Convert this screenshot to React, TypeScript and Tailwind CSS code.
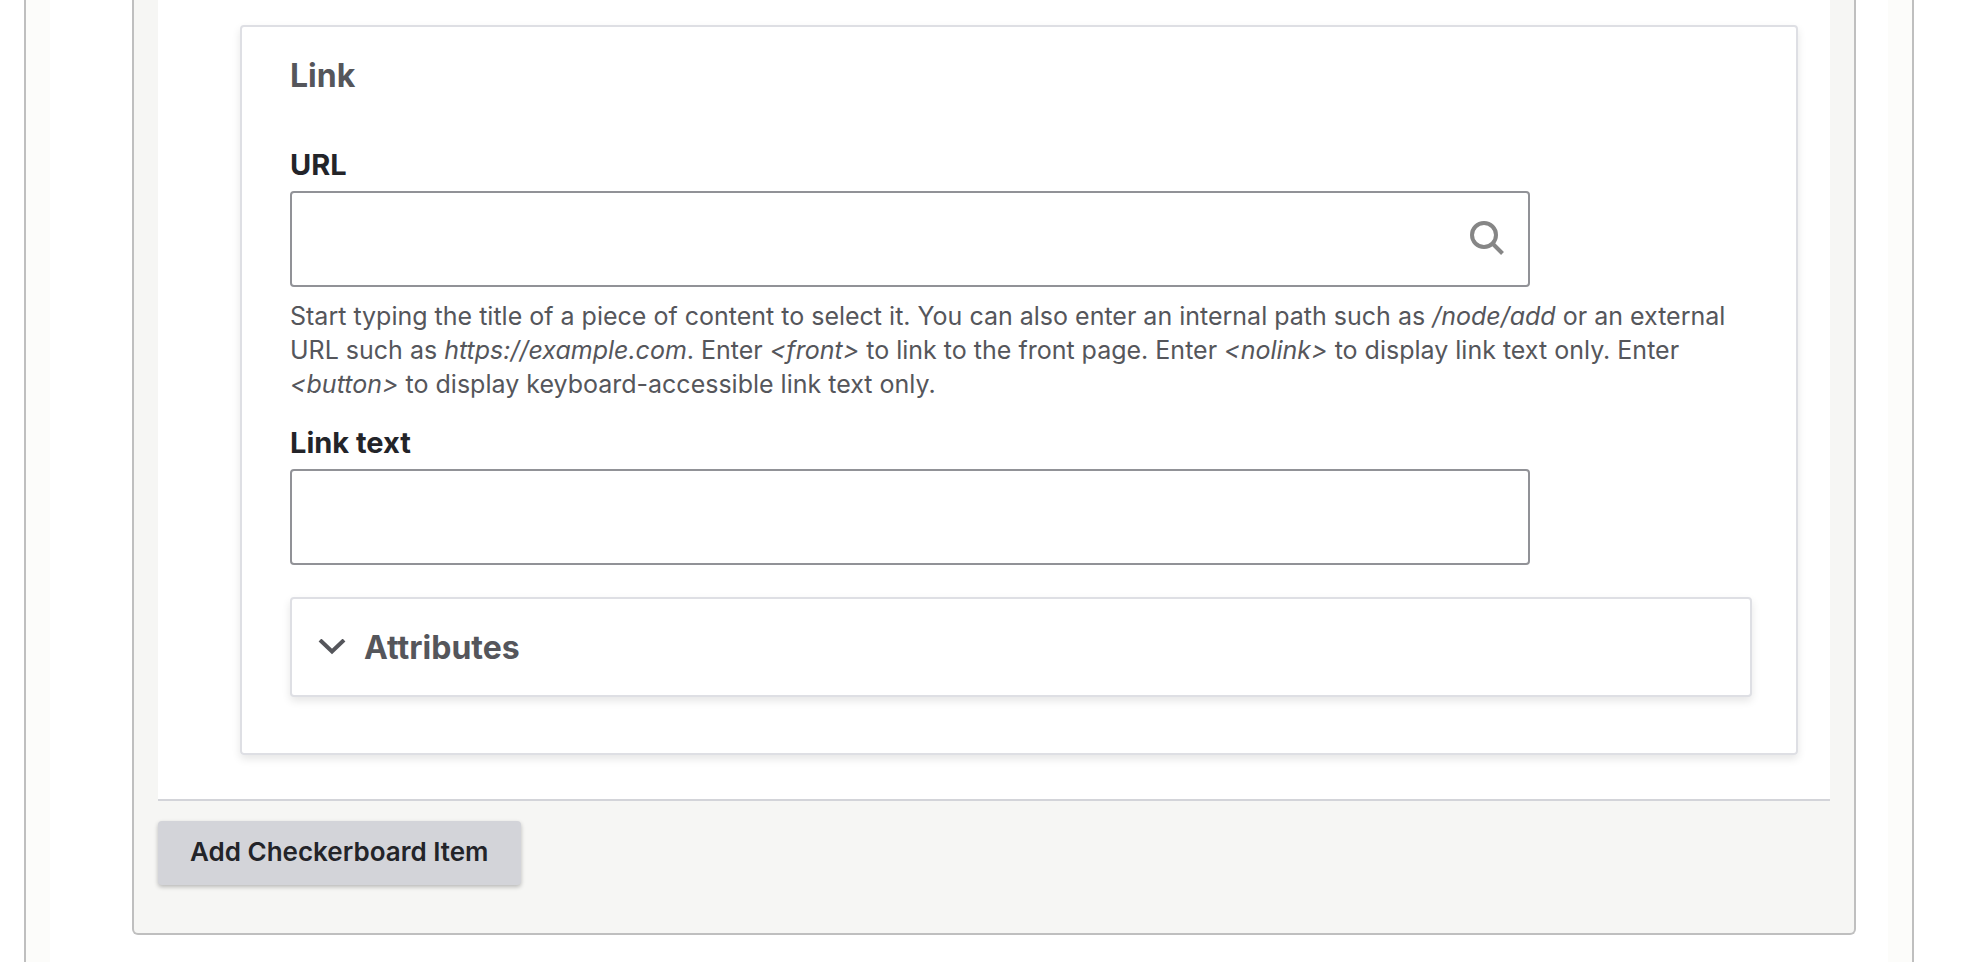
import { useState } from 'react'

const field = 'block w-full h-24 px-8 bg-white border-2 border-[#919297] rounded-[4px] text-[29px] text-[#232429] outline-none focus:ring-4 focus:ring-[#26a769]'
const label = 'block text-[29px] leading-9 font-bold text-[#232429]'
const card = 'bg-white border-2 border-[#dedfe4] rounded-[4px] shadow-[0_4px_8px_rgba(0,0,0,0.1)]'

export default function App() {
  const [url, setUrl] = useState('')
  const [linkText, setLinkText] = useState('')
  const [showAttributes, setShowAttributes] = useState(false)

  return (
    <div className="flex min-h-screen bg-white pl-6 pr-[58px] font-['Inter','Liberation_Sans',sans-serif]">
      <div className="flex flex-1 min-w-0 border-x-2 border-[#bfbfbf] bg-[#fcfcfa] px-6">
        <main className="flex-1 min-w-0 bg-white pl-[82px] pr-8">
          <section className="border-2 border-t-0 border-[#bfbfbf] rounded-b-[6px] bg-[#f6f6f4] px-6 pb-12">
            <div className="bg-white border-b-2 border-[#d3d4d9] pt-[25px] pb-11 pl-[82px] pr-8">
              <fieldset className={`${card} pt-7 pb-14 pl-12 pr-11`}>
                <h4 className="text-[32px] leading-[42px] font-bold text-[#55565b]">Link</h4>

                <div className="mt-[50px]">
                  <label htmlFor="url" className={label}>URL</label>
                  <div className="relative mt-2 max-w-[1240px]">
                    <input id="url" type="text" value={url} onChange={e => setUrl(e.target.value)} aria-describedby="url-help" className={`${field} pr-20`} />
                    <svg viewBox="0 0 34 34" className="absolute right-[26px] top-[30px] w-[34px] h-[34px]" fill="none" stroke="#868686" strokeWidth="4" aria-hidden="true">
                      <circle cx="14" cy="14" r="12" />
                      <path d="M22.5 22.5 32.5 32.5" />
                    </svg>
                  </div>
                  <p id="url-help" className="mt-3 text-[25px] leading-[34px] text-[#55565b]">
                    Start typing the title of a piece of content to select it. You can also enter an internal path such as <em>/node/add</em> or an external URL such as <em>https://example.com</em>. Enter <em>&lt;front&gt;</em> to link to the front page. Enter <em>&lt;nolink&gt;</em> to display link text only. Enter <em>&lt;button&gt;</em> to display keyboard-accessible link text only.
                  </p>
                </div>

                <div className="mt-6">
                  <label htmlFor="link-text" className={label}>Link text</label>
                  <div className="mt-2 max-w-[1240px]">
                    <input id="link-text" type="text" value={linkText} onChange={e => setLinkText(e.target.value)} className={field} />
                  </div>
                </div>

                <div className={`${card} mt-8`}>
                  <button type="button" aria-expanded={showAttributes} onClick={() => setShowAttributes(!showAttributes)}
                    className="flex items-center w-full h-24 pl-[26px] gap-[18px] text-left text-[32px] leading-[42px] font-bold text-[#55565b]">
                    <svg viewBox="0 0 28 16" className="w-7 h-4" fill="none" stroke="#55565b" strokeWidth="4" aria-hidden="true">
                      <path d="M2 1 14 12.5 26 1" />
                    </svg>
                    <span className="pt-0.5">Attributes</span>
                  </button>
                </div>
              </fieldset>
            </div>

            <button type="button" className="mt-5 h-16 px-8 pb-0.5 rounded-[4px] bg-[#d3d4d9] text-[26px] leading-8 font-semibold text-[#232429] shadow-[0_2px_4px_rgba(0,0,0,0.25)] hover:bg-[#c2c3ca]">
              Add Checkerboard Item
            </button>
          </section>
        </main>
      </div>
    </div>
  )
}
